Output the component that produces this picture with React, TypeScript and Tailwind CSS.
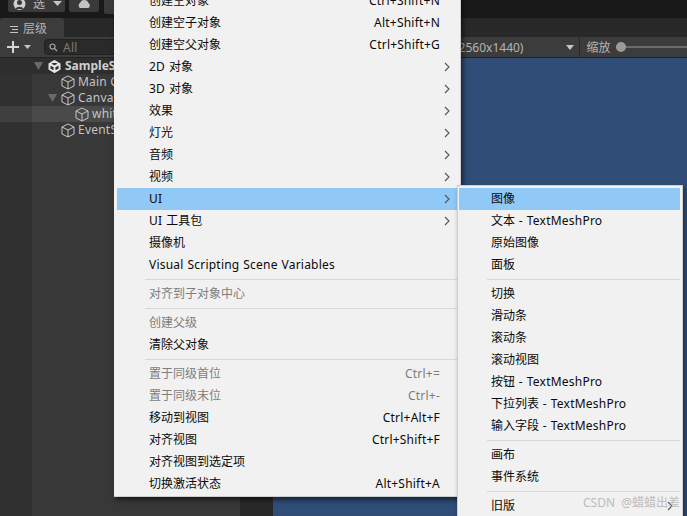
import React from "react";

type Row = { t?: string; k?: string; arrow?: boolean; off?: boolean; hi?: boolean; sep?: boolean };

const Chevron = ({ right }: { right: string }) => (
  <svg width="6" height="10" viewBox="0 0 6 10" className={`absolute top-[6px] ${right}`} fill="none">
    <path d="M1 1l4 4-4 4" stroke="#555" strokeWidth="1.1" />
  </svg>
);

const menu1: Row[] = [
  { t: "创建空对象", k: "Ctrl+Shift+N" },
  { t: "创建空子对象", k: "Alt+Shift+N" },
  { t: "创建空父对象", k: "Ctrl+Shift+G" },
  { t: "2D 对象", arrow: true },
  { t: "3D 对象", arrow: true },
  { t: "效果", arrow: true },
  { t: "灯光", arrow: true },
  { t: "音频", arrow: true },
  { t: "视频", arrow: true },
  { t: "UI", arrow: true, hi: true },
  { t: "UI 工具包", arrow: true },
  { t: "摄像机" },
  { t: "Visual Scripting Scene Variables" },
  { sep: true },
  { t: "对齐到子对象中心", off: true },
  { sep: true },
  { t: "创建父级", off: true },
  { t: "清除父对象" },
  { sep: true },
  { t: "置于同级首位", k: "Ctrl+=", off: true },
  { t: "置于同级末位", k: "Ctrl+-", off: true },
  { t: "移动到视图", k: "Ctrl+Alt+F" },
  { t: "对齐视图", k: "Ctrl+Shift+F" },
  { t: "对齐视图到选定项" },
  { t: "切换激活状态", k: "Alt+Shift+A" },
];

const menu2: Row[] = [
  { t: "图像", hi: true },
  { t: "文本 - TextMeshPro" },
  { t: "原始图像" },
  { t: "面板" },
  { sep: true },
  { t: "切换" },
  { t: "滑动条" },
  { t: "滚动条" },
  { t: "滚动视图" },
  { t: "按钮 - TextMeshPro" },
  { t: "下拉列表 - TextMeshPro" },
  { t: "输入字段 - TextMeshPro" },
  { sep: true },
  { t: "画布" },
  { t: "事件系统" },
  { sep: true },
  { t: "旧版", arrow: true },
];

function Mixed({ text }: { text: string }) {
  const parts = text.split(/([\u4e00-\u9fff]+)/).filter(Boolean);
  return (
    <span>
      {parts.map((p, i) =>
        /[\u4e00-\u9fff]/.test(p) ? (
          <span key={i}>{p}</span>
        ) : (
          <span key={i} className="tracking-[0.22px] [word-spacing:0.5px]">
            {p}
          </span>
        )
      )}
    </span>
  );
}

function Rows({ rows, chev }: { rows: Row[]; chev: string }) {
  return (
    <>
      {rows.map((r, i) =>
        r.sep ? (
          <div key={i} className="h-[7px] flex items-center ml-[28px]">
            <div className="h-[1px] w-full bg-[#d7d7d7]" />
          </div>
        ) : (
          <div
            key={i}
            className={`relative h-[22px] flex items-center justify-between pl-[32px] pr-[19px] whitespace-nowrap ${
              r.hi ? "bg-[#90c8f6]" : ""
            } ${r.off ? "text-[#7d7d7d]" : "text-[#0a0a0a]"}`}
          >
            <Mixed text={r.t ?? ""} />
            {r.k && <Mixed text={r.k} />}
            {r.arrow && <Chevron right={chev} />}
          </div>
        )
      )}
    </>
  );
}

const Cube = () => (
  <svg width="14" height="15" viewBox="0 0 14 15" fill="none" stroke="#c8c8c8" strokeWidth="1" className="shrink-0">
    <path d="M7 1l6 3v7l-6 3-6-3V4z M1 4l6 3 6-3 M7 7v7" />
  </svg>
);

const Tri = () => (
  <svg width="9" height="8" viewBox="0 0 9 8" className="shrink-0">
    <path d="M0 0h9L4.500 8z" fill="#6a6a6a" />
  </svg>
);

function Tree({ label, indent, tri, hi }: { label: string; indent: string; tri?: boolean; hi?: boolean }) {
  return (
    <div className={`h-[16px] flex items-center ${indent} ${hi ? "bg-[#4a4a4a]" : ""}`}>
      <div className="w-[12px] shrink-0 flex">{tri && <div className="-ml-[1px]"><Tri /></div>}</div>
      <Cube />
      <span className="ml-[3px] whitespace-nowrap text-[#c4c4c4] tracking-[0.22px]">{label}</span>
    </div>
  );
}

export default function App() {
  return (
    <div
      className="relative w-[687px] h-[516px] overflow-hidden bg-[#282828] text-[12px]"
      style={{ fontFamily: '"Noto Sans", "Noto Sans CJK SC", sans-serif' }}
    >
      {/* top bar */}
      <div className="h-[18px] bg-[#191919] flex items-start pl-[8px] gap-[4px]">
        <div className="w-[57px] h-[12px] bg-[#3a3a3a] rounded-b-[2px] flex items-center pl-[5px] overflow-hidden">
          <svg width="13" height="12" viewBox="0 0 13 12" className="shrink-0">
            <circle cx="6.500" cy="4" r="6" fill="#cfcfcf" />
            <circle cx="6.500" cy="2.500" r="2.500" fill="#3a3a3a" />
            <path d="M2.500 9c1-3 7-3 8 0z" fill="#3a3a3a" />
          </svg>
          <span className="ml-[7px] text-[#bdbdbd] leading-[12px] -mt-[5px]">选</span>
          <svg width="9" height="5" viewBox="0 0 9 5" className="ml-[8px] -mt-[5px]">
            <path d="M0 0h9L4.500 5z" fill="#c4c4c4" />
          </svg>
        </div>
        <div className="w-[30px] h-[12px] bg-[#3a3a3a] rounded-b-[2px] flex justify-center">
          <svg width="15" height="8" viewBox="0 0 15 8">
            <path d="M3 8a3 3 0 0 1 0-5 4.500 4.500 0 0 1 8.500 0 3 3 0 0 1 0 5z" fill="#c4c4c4" />
          </svg>
        </div>
        <div className="w-[20px] h-[14px] bg-[#3a3a3a] rounded-bl-[2px] ml-[1px]" />
      </div>
      {/* tab bar */}
      <div className="h-[19px] bg-[#282828] flex">
        <div className="w-[64px] bg-[#3c3c3c] rounded-t-[3px] flex items-center pl-[8px] pt-[3px] text-[#b4b4b4] gap-[5px]">
          <svg width="10" height="9" viewBox="0 0 10 9" stroke="#c4c4c4" fill="none">
            <path d="M2 1.500h8M4 4.500h6M2 7.500h8" />
          </svg>
          <span>层级</span>
        </div>
      </div>
      {/* body */}
      <div className="flex h-[479px]">
        <div className="w-[240px] shrink-0 flex flex-col">
          <div className="h-[21px] bg-[#3c3c3c] border-b border-[#232323] flex items-center pl-[7px] gap-[5px]">
            <svg width="12" height="12" viewBox="0 0 12 12">
              <path d="M5 0h2v5h5v2H7v5H5V7H0V5h5z" fill="#d6d6d6" />
            </svg>
            <svg width="7" height="4" viewBox="0 0 7 4">
              <path d="M0 0h7L3.500 4z" fill="#c4c4c4" />
            </svg>
            <div className="ml-[8px] flex-1 h-[16px] rounded-[4px] bg-[#2a2a2a] border border-[#212121] flex items-center pl-[4px] gap-[4px] text-[#7c7c7c]">
              <svg width="10" height="9" viewBox="0 0 10 9" fill="none" stroke="#a8a8a8" strokeWidth="1.2">
                <circle cx="3.500" cy="3.500" r="2.500" />
                <path d="M5.500 5.500l2.500 2.500" />
              </svg>
              <span className="leading-none tracking-[0.22px] pt-[1px]">All</span>
            </div>
          </div>
          <div className="h-[16px] bg-[#2e2e2e] flex items-center pl-[34px]">
            <div className="w-[14px] shrink-0 flex"><Tri /></div>
            <svg width="13" height="13" viewBox="0 0 13 13" fill="none" stroke="#e4e4e4" strokeWidth="2" className="shrink-0">
              <path d="M6.500 1L11.500 4v5l-5 3-5-3V4z M6.500 6.500V12 M6.500 6.500L1.500 4 M6.500 6.500L11.500 4" />
            </svg>
            <span className="ml-[4px] font-bold text-[#cfcfcf] whitespace-nowrap">SampleScene</span>
          </div>
          <div className="flex-1 flex">
            <div className="w-[32px] bg-[#303030] shrink-0 pt-[32px]">
              <div className="h-[16px] bg-[#3f3f3f]" />
            </div>
            <div className="flex-1 bg-[#383838] flex flex-col">
              <Tree label="Main Camera" indent="pl-[17px]" />
              <Tree label="Canvas" indent="pl-[17px]" tri />
              <Tree label="white" indent="pl-[31px]" hi />
              <Tree label="EventSystem" indent="pl-[17px]" />
            </div>
          </div>
        </div>
        <div className="flex-1 flex flex-col">
          <div className="h-[21px] bg-[#3c3c3c] border-b border-[#232323] flex items-center text-[#b4b4b4]">
            <span className="ml-[215px] pt-[1px] whitespace-nowrap">(2560x1440)</span>
            <svg width="8" height="5" viewBox="0 0 8 5" className="ml-[43px]">
              <path d="M0 0h8L4 5z" fill="#c4c4c4" />
            </svg>
            <div className="ml-[5px] w-[1px] h-full bg-[#282828]" />
            <span className="ml-[6px] pt-[1px] whitespace-nowrap">缩放</span>
            <div className="relative ml-[6px] flex-1 h-[2px] bg-[#6b6b6b]">
              <div className="absolute -top-[4px] left-0 w-[10px] h-[10px] rounded-full bg-[#9a9a9a]" />
            </div>
          </div>
          <div className="flex-1 flex">
            <div className="w-[33px] bg-[#282828]" />
            <div className="flex-1 bg-[#2f4d77]" />
          </div>
        </div>
      </div>

      {/* context menu */}
      <div className="absolute left-[114px] top-[-10px] w-[347px] h-[507px] pl-[3px] pr-[1px] bg-[#f1f1f1] border-r border-b border-[#cfcfcf] shadow-[2px_3px_5px_rgba(0,0,0,0.55)]">
        <Rows rows={menu1} chev="right-[9px]" />
      </div>
      {/* submenu */}
      <div className="absolute left-[457px] top-[185px] w-[226px] h-[340px] pt-[2px] pl-[1px] pr-[2px] bg-[#f1f1f1] border border-[#cfcfcf] shadow-[2px_3px_5px_rgba(0,0,0,0.4)]">
        <Rows rows={menu2} chev="right-[7px]" />
      </div>
      {/* watermark */}
      <div className="absolute left-[583px] top-[494px] text-[#b0b0b0] opacity-80 whitespace-nowrap [word-spacing:3px]">CSDN @蜡蜡出差</div>
    </div>
  );
}
